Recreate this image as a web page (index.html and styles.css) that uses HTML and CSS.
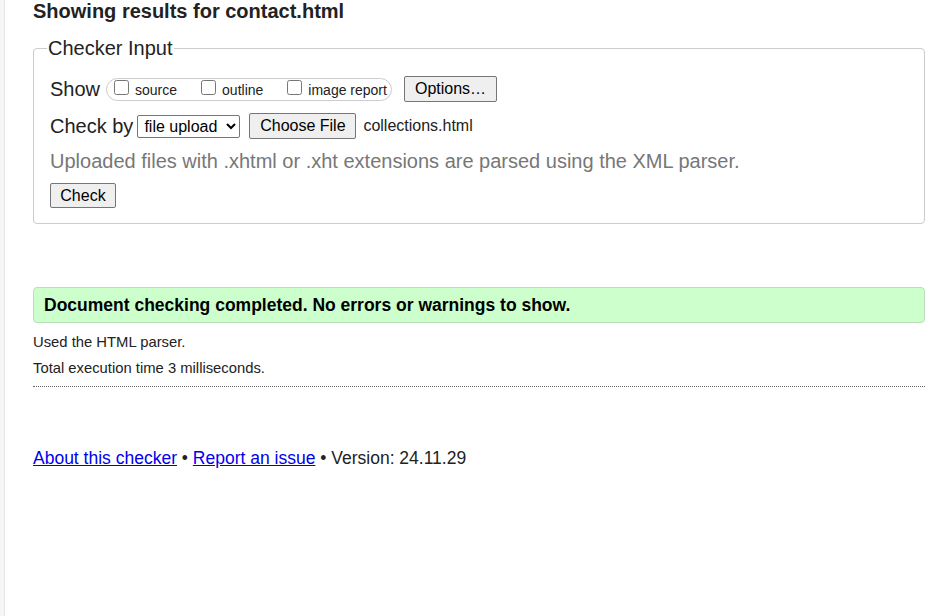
FILE: index.html
```html
<!DOCTYPE html>
<html lang="en">
<head>
<meta charset="utf-8">
<title>Showing results for contact.html - Nu Html Checker</title>
<link rel="stylesheet" href="styles.css">
</head>
<body>
<div class="shell">
  <div class="gutter"></div>
  <main class="main">
    <h2 class="title">Showing results for contact.html</h2>
    <fieldset class="checker">
      <legend class="legend">Checker Input</legend>
      <div class="row row-show">
        <span class="row-label">Show</span>
        <span class="pill">
          <label class="opt"><input type="checkbox" class="cb">source</label>
          <label class="opt"><input type="checkbox" class="cb">outline</label>
          <label class="opt"><input type="checkbox" class="cb">image report</label>
        </span>
        <button class="btn btn-options" type="button">Options…</button>
      </div>
      <div class="row row-check">
        <span class="row-label">Check by</span>
        <select class="sel"><option>file upload</option></select>
        <button class="btn btn-file" type="button">Choose File</button>
        <span class="filename">collections.html</span>
      </div>
      <p class="note">Uploaded files with .xhtml or .xht extensions are parsed using the XML parser.</p>
      <div class="row-submit"><button class="btn btn-check" type="button">Check</button></div>
    </fieldset>
    <p class="success">Document checking completed. No errors or warnings to show.</p>
    <div class="details">
      <p class="detail detail-first">Used the HTML parser.</p>
      <p class="detail">Total execution time 3 milliseconds.</p>
    </div>
    <p class="footer"><a href="#" class="link">About this checker</a> • <a href="#" class="link">Report an issue</a> • Version: 24.11.29</p>
  </main>
</div>
</body>
</html>
```
FILE: styles.css
```css
html, body {
  margin: 0;
  padding: 0;
  background: #ffffff;
}
body {
  font-family: "Liberation Sans", Arial, sans-serif;
  color: #222222;
}
.shell {
  display: flex;
  min-height: 616px;
}
.gutter {
  width: 4px;
  flex: 0 0 4px;
  background: #f6f6f6;
  border-right: 1px solid #e6e6e6;
}
.main {
  flex: 1;
  padding: 0 15px 0 28px;
}
.title {
  margin: 0;
  font-size: 20px;
  line-height: 22px;
  font-weight: bold;
  color: #222;
}
.checker {
  margin: 15px 0 0 0;
  padding: 15px 16px 15px 16px;
  border: 1px solid #cccccc;
  border-radius: 4px;
  min-width: 0;
}
.legend {
  font-size: 20px;
  line-height: 23px;
  padding: 0 1px;
  margin-left: -3px;
  color: #222;
}
.row {
  display: flex;
  align-items: center;
  height: 28px;
}
.row-check {
  margin-top: 9px;
}
.row-label {
  font-size: 20px;
  line-height: 24px;
}
.pill {
  display: inline-flex;
  align-items: flex-end;
  box-sizing: border-box;
  height: 23px;
  width: 286px;
  margin-left: 6px;
  padding: 0 6px 0 7px;
  border: 1px solid #cccccc;
  border-radius: 12px;
}
.opt {
  font-size: 14px;
  line-height: 16px;
  margin-right: 24px;
  display: inline-flex;
  align-items: flex-end;
  padding-bottom: 2px;
  white-space: nowrap;
}
.opt:last-child {
  margin-right: 0;
}
.cb {
  width: 15px;
  height: 15px;
  margin: 0 6px 3px 0;
}
.btn {
  font-family: "Liberation Sans", Arial, sans-serif;
  font-size: 16px;
  color: #000;
  background: #efefef;
  border: 1px solid #767676;
  border-radius: 2px;
  padding: 0;
  height: 26px;
  white-space: nowrap;
}
.btn-options {
  margin-left: 12px;
  width: 93px;
}
.sel {
  font-family: "Liberation Sans", Arial, sans-serif;
  font-size: 16px;
  color: #000;
  margin-left: 4px;
  height: 23px;
  width: 103px;
  border: 1px solid #767676;
  border-radius: 2px;
  background: #fff;
  padding: 0 0 0 2px;
}
.btn-file {
  margin-left: 9px;
  width: 107px;
}
.filename {
  margin-left: 7px;
  font-size: 16px;
  color: #222;
}
.note {
  margin: 9px 0 0 0;
  font-size: 20px;
  line-height: 24px;
  color: #777777;
}
.row-submit {
  margin-top: 10px;
  display: flex;
}
.btn-check {
  height: 25px;
  width: 66px;
}
.success {
  margin: 63px 0 0 0;
  background: #ccffcc;
  border: 1px solid #bcdcbc;
  border-radius: 4px;
  padding: 0 10px;
  font-size: 17.5px;
  font-weight: bold;
  line-height: 34px;
  color: #000;
}
.details {
  padding-bottom: 8px;
  border-bottom: 1px dotted #666666;
}
.detail {
  margin: 6px 0 0 0;
  font-size: 14.8px;
  line-height: 20px;
}
.detail-first {
  margin-top: 9px;
}
.footer {
  margin: 60px 0 0 0;
  font-size: 17.5px;
  line-height: 22px;
  color: #222;
}
.link {
  color: #0000ee;
  text-decoration: underline;
}
```
